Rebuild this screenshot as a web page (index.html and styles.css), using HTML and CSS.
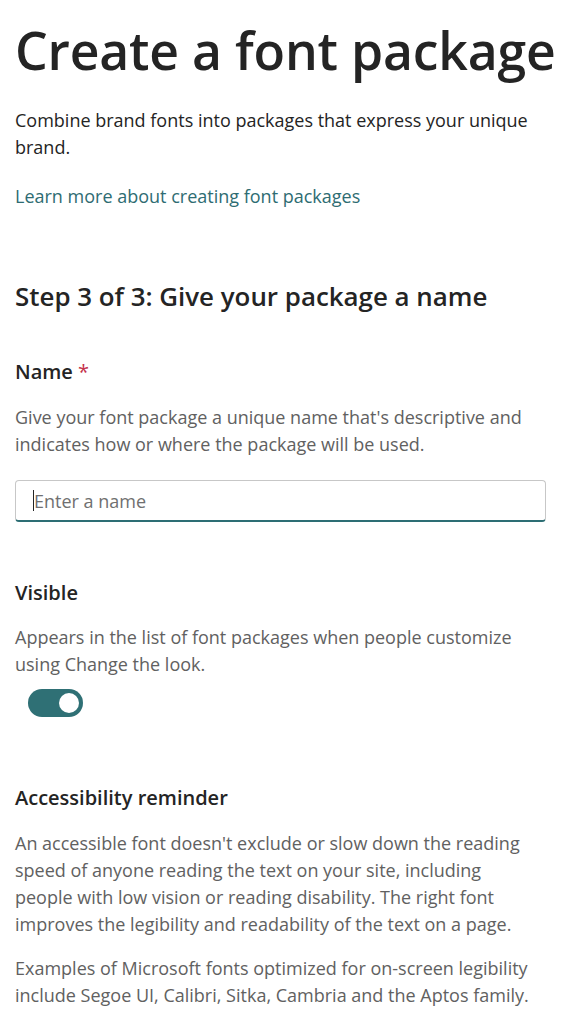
FILE: index.html
```html
<!DOCTYPE html>
<html lang="en">
<head>
<meta charset="utf-8">
<link rel="stylesheet" href="styles.css">
</head>
<body>
<main class="page">
  <h1 class="title">Create a font package</h1>
  <p class="intro">Combine brand fonts into packages that express your unique brand.</p>
  <a class="link" href="#">Learn more about creating font packages</a>

  <h2 class="step">Step 3 of 3: Give your package a name</h2>

  <section class="field name">
    <div class="label">Name <span class="req">*</span></div>
    <p class="desc">Give your font package a unique name that's descriptive and indicates how or where the package will be used.</p>
    <div class="input"><span class="caret"></span><span class="placeholder">Enter a name</span></div>
  </section>

  <section class="field visible">
    <div class="label">Visible</div>
    <p class="desc">Appears in the list of font packages when people customize using Change the look.</p>
    <div class="toggle"><span class="knob"></span></div>
  </section>

  <section class="field a11y">
    <div class="label">Accessibility reminder</div>
    <p class="desc">An accessible font doesn't exclude or slow down the reading speed of anyone reading the text on your site, including people with low vision or reading disability. The right font improves the legibility and readability of the text on a page.</p>
    <p class="desc">Examples of Microsoft fonts optimized for on-screen legibility include Segoe UI, Calibri, Sitka, Cambria and the Aptos family.</p>
  </section>
</main>
</body>
</html>
```

FILE: styles.css
```css
* { box-sizing: border-box; }
html, body { margin: 0; padding: 0; background: #ffffff; }
body {
  font-family: "Open Sans", "Noto Sans", sans-serif;
  color: #242424;
}
.page {
  padding: 0 38px 0 15px;
  width: 578px;
}
.title {
  margin: 0;
  padding-top: 18px;
  font-size: 51.7px;
  line-height: 64px;
  font-weight: 600;
  letter-spacing: -0.2px;
  color: #242424;
  white-space: nowrap;
}
.intro {
  margin: 24.5px 0 0;
  font-size: 18px;
  line-height: 27px;
  color: #242424;
}
.link {
  display: block;
  margin-top: 22px;
  font-size: 18px;
  line-height: 27px;
  color: #2e6c72;
  text-decoration: none;
}
.step {
  margin: 70.5px 0 0;
  font-size: 25.9px;
  line-height: 32px;
  font-weight: 600;
  color: #242424;
  white-space: nowrap;
}
.label {
  font-size: 20px;
  line-height: 26px;
  font-weight: 600;
  color: #242424;
}
.req { color: #c4314b; font-weight: 400; }
.desc {
  margin: 18.5px 0 0;
  font-size: 18px;
  line-height: 27px;
  color: #616161;
}
.name { margin-top: 47px; }
.input {
  margin-top: 22.5px;
  width: 531px;
  height: 42px;
  border: 1px solid #c7c7c7;
  border-bottom: 2px solid #2d6e74;
  border-radius: 4px;
  display: flex;
  align-items: center;
  padding-left: 17px;
}
.caret {
  width: 1px;
  height: 21px;
  background: #242424;
}
.placeholder {
  font-size: 18px;
  color: #707070;
}
.visible { margin-top: 58px; }
.visible .desc { margin-top: 17.5px; }
.toggle {
  margin: 11.5px 0 0 13px;
  width: 55px;
  height: 28px;
  border-radius: 14px;
  background: #2f7075;
  display: flex;
  align-items: center;
  justify-content: flex-end;
  padding-right: 4px;
}
.knob {
  width: 20px;
  height: 20px;
  border-radius: 50%;
  background: #ffffff;
}
.a11y { margin-top: 68px; }
.a11y .desc + .desc { margin-top: 17px; }
```
